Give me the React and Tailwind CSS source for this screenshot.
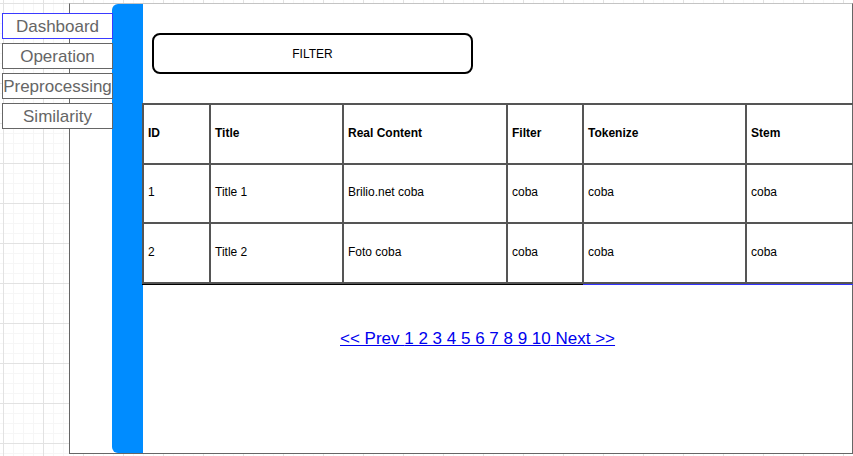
import React from 'react'

const menu = ['Dashboard', 'Operation', 'Preprocessing', 'Similarity']

const columns = ['ID', 'Title', 'Real Content', 'Filter', 'Tokenize', 'Stem']

const rows = [
  ['1', 'Title 1', 'Brilio.net coba', 'coba', 'coba', 'coba'],
  ['2', 'Title 2', 'Foto coba', 'coba', 'coba', 'coba'],
]

const pages = [1, 2, 3, 4, 5, 6, 7, 8, 9, 10]

export default function App() {
  return (
    <div className="flex items-start w-[853px] h-[456px] overflow-hidden font-['Liberation_Sans',Arial,sans-serif] bg-white bg-[linear-gradient(to_right,#e2e2e2_1px,transparent_1px),linear-gradient(to_bottom,#e2e2e2_1px,transparent_1px),linear-gradient(to_right,#f6f6f6_1px,transparent_1px),linear-gradient(to_bottom,#f6f6f6_1px,transparent_1px)] bg-[size:40px_40px,40px_40px,10px_10px,10px_10px] bg-[position:3px_3px]">
      {/* side menu sits above the main frame */}
      <nav className="relative z-10 flex flex-col gap-[4px] pt-[13px] pl-[2px] shrink-0">
        {menu.map((item, i) => (
          <button
            key={item}
            type="button"
            className={
              i === 0
                ? 'w-[111px] h-[26px] bg-white border border-[#3a3aff] text-[17px] leading-none text-[#666] flex items-center justify-center'
                : 'w-[111px] h-[26px] bg-white border border-[#666] text-[17px] leading-none text-[#666] flex items-center justify-center'
            }
          >
            {item}
          </button>
        ))}
      </nav>

      <div className="-ml-[44px] mt-[3px] w-[784px] h-[451px] shrink-0 bg-white border border-[#666] border-t-[#c4c4c4] flex">
        <div className="w-[42px] shrink-0" />
        <div className="w-[31px] shrink-0 bg-[#008cff] rounded-l-[6px]" />

        <main className="flex-1 flex flex-col">
          <button
            type="button"
            className="mt-[29px] ml-[9px] w-[321px] h-[41px] border-2 border-black rounded-[8px] bg-white text-[12px] text-black flex items-center justify-center"
          >
            FILTER
          </button>

          <div className="mt-[29px] -ml-px w-[711px] grid grid-cols-[67px_133px_164px_76px_163px_108px] border-l-2 border-t-2 border-[#555] text-[12px] text-black">
            {columns.map((c) => (
              <div key={c} className="h-[60px] flex items-center pl-[4px] pb-[2px] font-bold border-r-2 border-b-2 border-[#555]">
                {c}
              </div>
            ))}
            {rows.map((r, ri) =>
              r.map((cell, ci) => (
                <div
                  key={ri + '-' + ci}
                  className={
                    ri === 0
                      ? 'h-[59px] flex items-center pl-[4px] pb-[3px] border-r-2 border-b-2 border-[#555]'
                      : 'h-[60px] flex items-center pl-[4px] pb-[2px] border-r-2 border-b-2 border-[#555]'
                  }
                >
                  {cell}
                </div>
              ))
            )}
          </div>
          <div className="flex h-[1px] w-[711px] -ml-px">
            <div className="w-[441px] bg-black" />
            <div className="flex-1 bg-[#3333ff]" />
          </div>

          <div className="mt-[44px] ml-[197px] text-[17px] leading-[20px]">
            <a href="#" className="text-[#0000ee] underline">
              {'<< Prev '}
              {pages.join(' ')}
              {' Next >>'}
            </a>
          </div>
        </main>
      </div>
    </div>
  )
}
